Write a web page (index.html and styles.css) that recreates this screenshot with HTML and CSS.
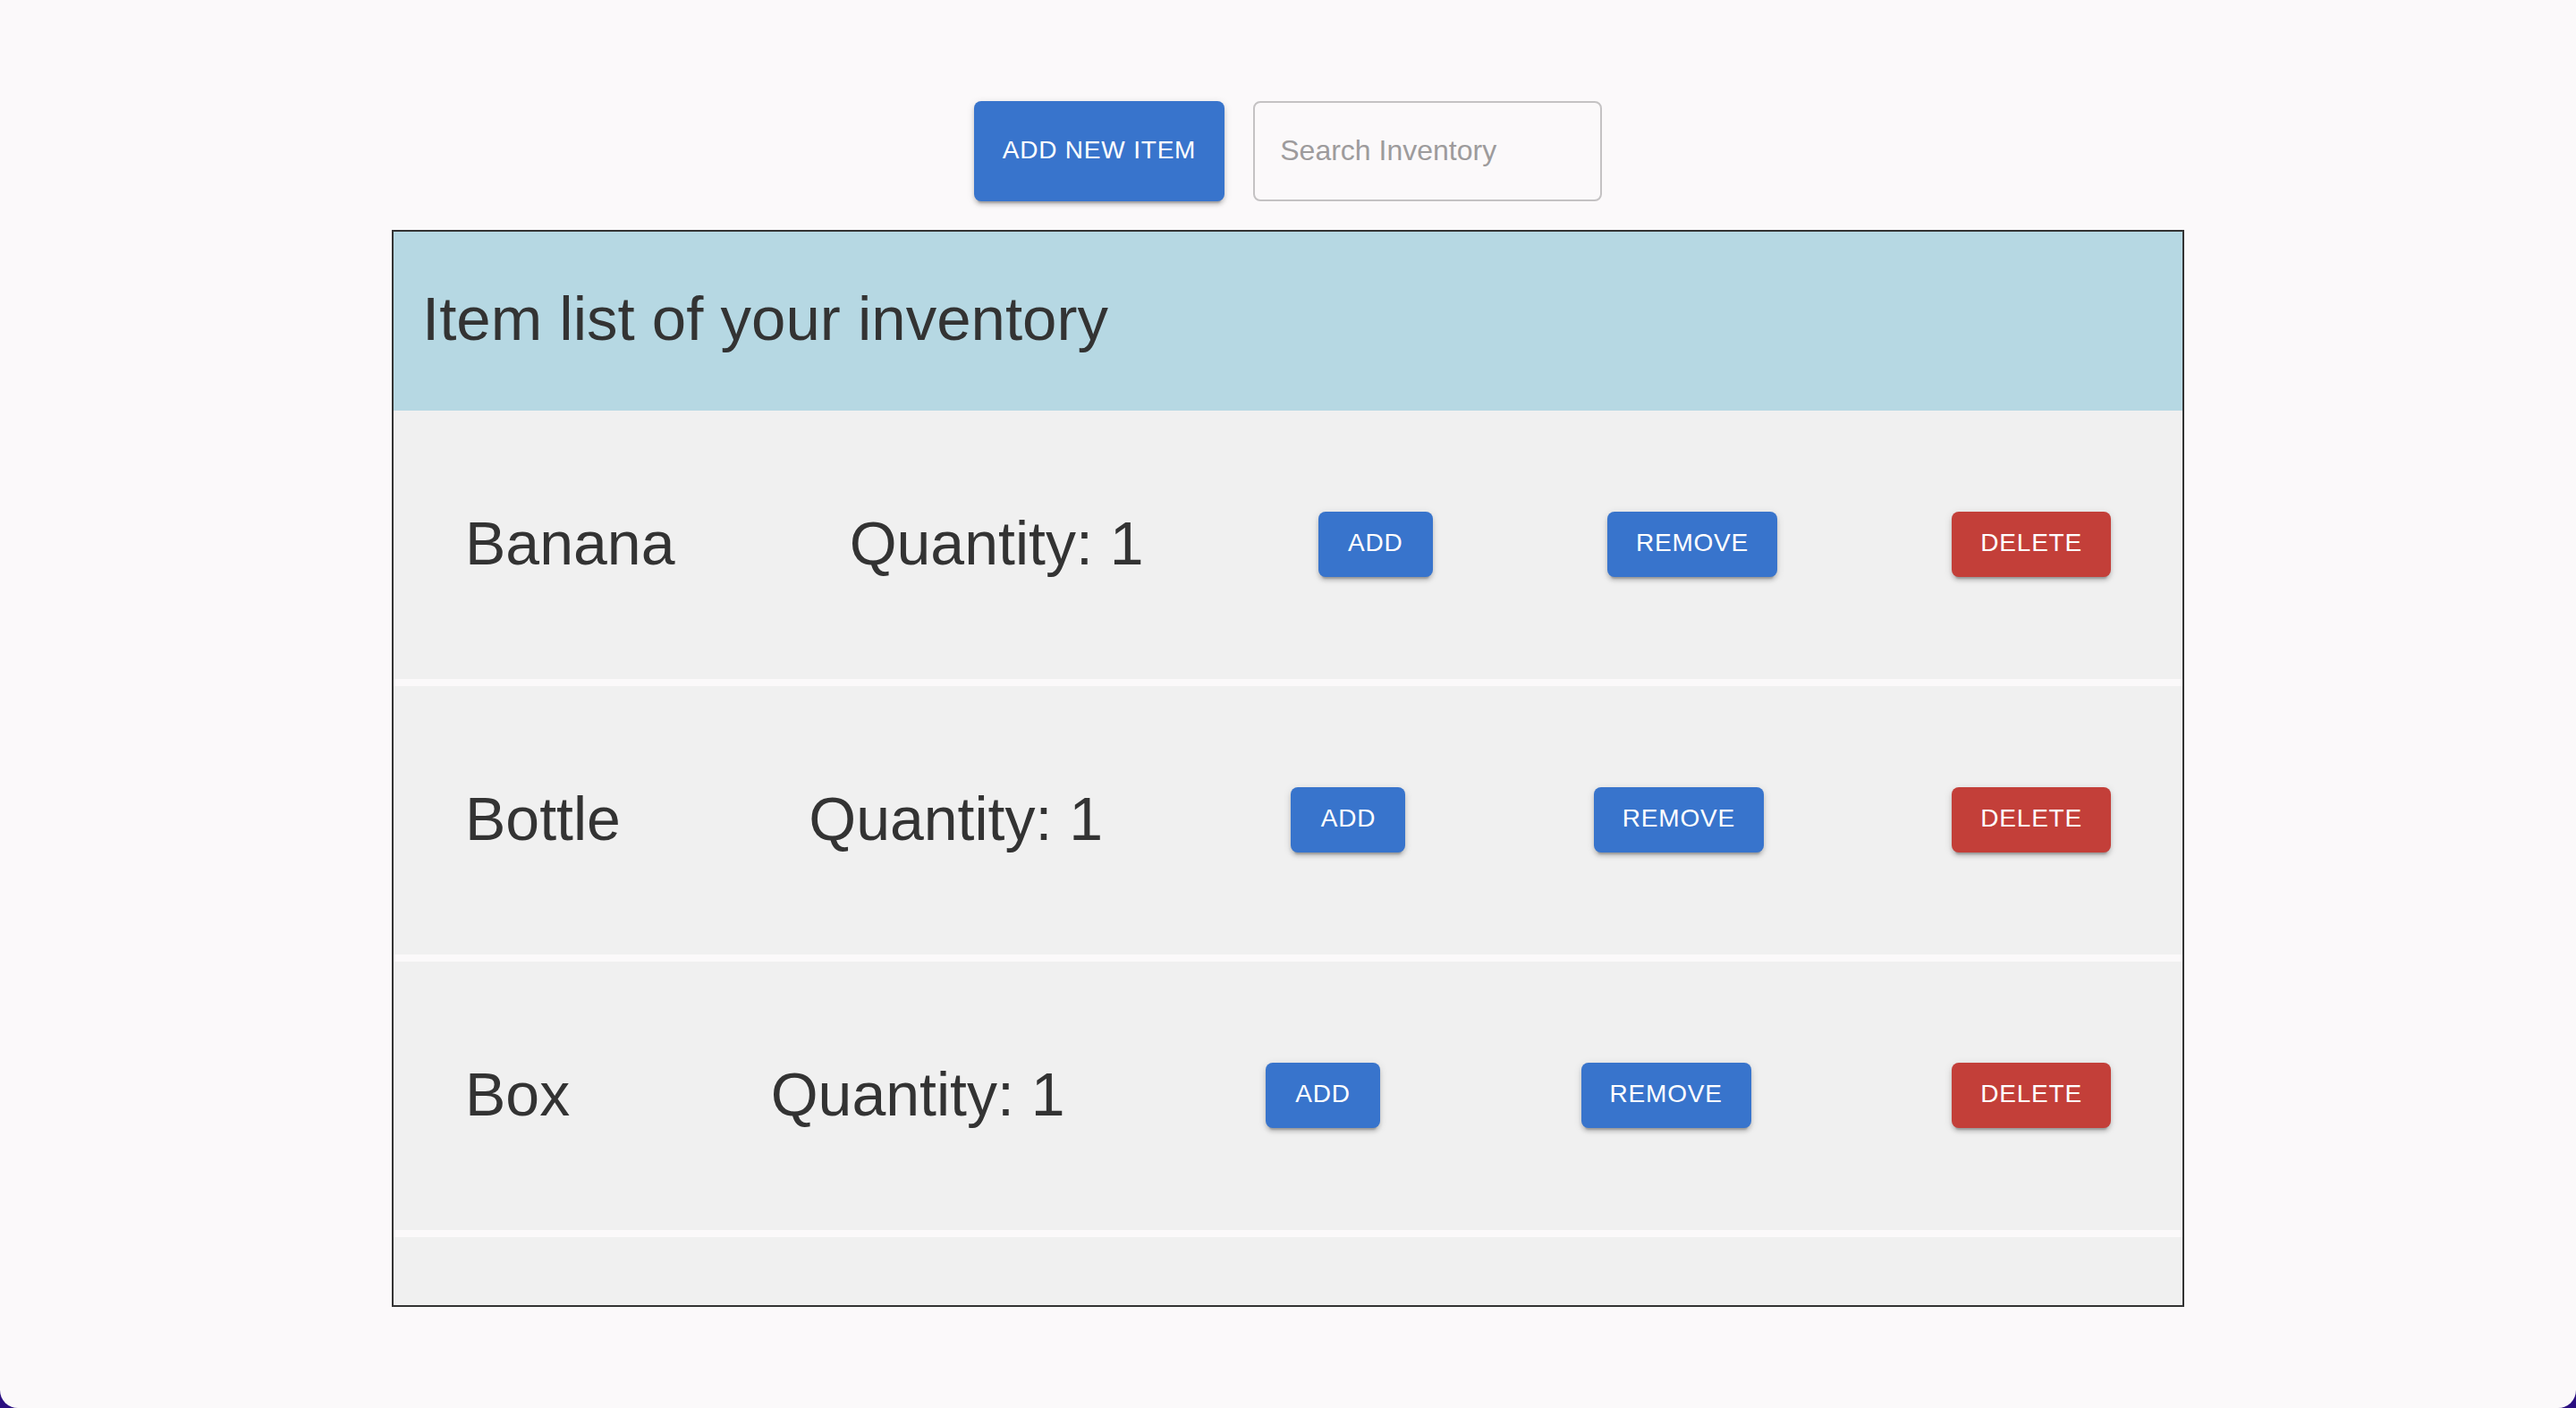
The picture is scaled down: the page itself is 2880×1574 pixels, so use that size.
FILE: index.html
```html
<!DOCTYPE html>
<html lang="en">
<head>
<meta charset="utf-8">
<title>Inventory</title>
<link rel="stylesheet" href="styles.css">
</head>
<body>
<div class="window">
  <div class="toolbar">
    <button class="btn btn-blue btn-tall">Add New Item</button>
    <div class="search"><input type="text" placeholder="Search Inventory"></div>
  </div>
  <div class="table">
    <div class="table-head">
      <h2 class="title">Item list of your inventory</h2>
    </div>
    <div class="rows">
      <div class="row">
        <span class="cell">Banana</span>
        <span class="cell">Quantity: 1</span>
        <button class="btn btn-blue">Add</button>
        <button class="btn btn-blue">Remove</button>
        <button class="btn btn-red">Delete</button>
      </div>
      <div class="row">
        <span class="cell">Bottle</span>
        <span class="cell">Quantity: 1</span>
        <button class="btn btn-blue">Add</button>
        <button class="btn btn-blue">Remove</button>
        <button class="btn btn-red">Delete</button>
      </div>
      <div class="row">
        <span class="cell">Box</span>
        <span class="cell">Quantity: 1</span>
        <button class="btn btn-blue">Add</button>
        <button class="btn btn-blue">Remove</button>
        <button class="btn btn-red">Delete</button>
      </div>
      <div class="row row-partial"></div>
    </div>
  </div>
</div>
</body>
</html>
```
FILE: styles.css
```css
* { box-sizing: border-box; }
html, body { margin: 0; padding: 0; }
body {
  background: #2a0f80;
  font-family: "Liberation Sans", Arial, Helvetica, sans-serif;
  color: #333333;
}
.window {
  width: 2880px;
  height: 1574px;
  background: #fbf9fa;
  border-radius: 0 0 20px 20px;
  display: flex;
  flex-direction: column;
  align-items: center;
  justify-content: center;
  gap: 32px;
}
.toolbar {
  display: flex;
  flex-direction: row;
  gap: 32px;
  align-items: center;
}
.btn {
  font-family: "Liberation Sans", Arial, Helvetica, sans-serif;
  font-size: 28px;
  font-weight: 500;
  letter-spacing: 0.8px;
  text-transform: uppercase;
  color: #ffffff;
  border: none;
  border-radius: 8px;
  padding: 10px 32px 14px;
  min-width: 128px;
  height: 73px;
  line-height: 49px;
  cursor: pointer;
  box-shadow: 0 6px 2px -4px rgba(0,0,0,0.2), 0 4px 4px 0 rgba(0,0,0,0.14), 0 2px 10px 0 rgba(0,0,0,0.12);
}
.btn-blue { background: #3874cc; }
.btn-red { background: #c33f39; }
.btn-tall { height: 112px; }
.search {
  width: 390px;
  height: 112px;
  border: 2px solid #c4c2c3;
  border-radius: 8px;
  display: flex;
  align-items: center;
  padding: 0 28px 2px;
}
.search input {
  border: none;
  outline: none;
  background: transparent;
  width: 100%;
  font-family: "Liberation Sans", Arial, Helvetica, sans-serif;
  font-size: 32px;
  color: #333;
  padding: 0;
}
.search input::placeholder { color: #9d9b9c; }
.table {
  border: 2px solid #333333;
  width: 2004px;
}
.table-head {
  height: 200px;
  background: #b6d8e3;
  display: flex;
  align-items: center;
  padding: 0 32px 4px;
}
.title {
  margin: 0;
  font-size: 69px;
  font-weight: 400;
  line-height: 1.235;
  color: #333333;
}
.rows {
  height: 1000px;
  overflow: auto;
  scrollbar-width: none;
  display: flex;
  flex-direction: column;
  gap: 8px;
}
.rows::-webkit-scrollbar { display: none; }
.row {
  flex: 0 0 auto;
  min-height: 300px;
  background: #f0f0f0;
  display: flex;
  justify-content: space-between;
  align-items: center;
  padding: 0 80px 2px;
}
.cell {
  font-size: 68px;
  line-height: 1.235;
  color: #333333;
}
```
